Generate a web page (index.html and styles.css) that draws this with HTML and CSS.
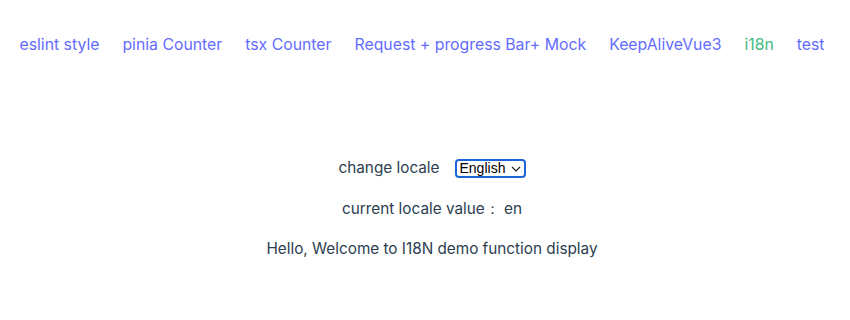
FILE: index.html
```html
<!DOCTYPE html>
<html lang="en">
<head>
<meta charset="utf-8">
<title>i18n</title>
<link rel="stylesheet" href="styles.css">
</head>
<body>
<div id="app">
  <nav class="nav">
    <a class="nav-link" href="#">eslint style</a>
    <a class="nav-link" href="#">pinia Counter</a>
    <a class="nav-link" href="#">tsx Counter</a>
    <a class="nav-link" href="#">Request + progress Bar+ Mock</a>
    <a class="nav-link" href="#">KeepAliveVue3</a>
    <a class="nav-link active" href="#">i18n</a>
    <a class="nav-link" href="#">test</a>
  </nav>
  <main class="content">
    <div class="row">
      <span>change locale</span>
      <span class="select-wrap">
        <select class="locale-select">
          <option>English</option>
          <option>中文</option>
        </select>
        <svg class="chev" width="10" height="6" viewBox="0 0 10 6"><path d="M1 1l4 4 4-4" fill="none" stroke="#222" stroke-width="1.2"/></svg>
      </span>
    </div>
    <div class="row">current locale value： en</div>
    <div class="row">Hello, Welcome to I18N demo function display</div>
  </main>
</div>
</body>
</html>
```
FILE: styles.css
```css
body {
  margin: 8px;
  background: #fff;
  font-family: Inter, "Noto Sans", sans-serif;
  font-size: 16px;
  color: #2c3e50;
  -webkit-font-smoothing: antialiased;
}
#app {
  text-align: center;
}
.nav {
  display: flex;
  justify-content: center;
  gap: 23px;
  padding: 26px 6px 0 0;
  line-height: 22px;
  font-size: 15.8px;
}
.nav-link {
  color: #646cff;
  text-decoration: none;
  font-weight: 400;
}
.nav-link.active {
  color: #42b983;
}
.content {
  margin-top: 101px;
  padding-left: 14px;
  display: flex;
  flex-direction: column;
  align-items: center;
  gap: 18.5px;
  font-size: 15.3px;
}
.row {
  line-height: 22px;
  display: flex;
  align-items: center;
  gap: 15px;
  white-space: pre;
}
.select-wrap {
  position: relative;
  display: inline-flex;
}
.locale-select {
  appearance: none;
  -webkit-appearance: none;
  width: 71px;
  height: 19px;
  border: 2px solid #1a66d6;
  border-radius: 4px;
  background: #fff;
  font-family: "Liberation Sans", Arial, sans-serif;
  font-size: 14px;
  color: #000;
  padding: 0 0 0 3px;
  margin: 0;
  box-sizing: border-box;
  line-height: 15px;
}
.chev {
  position: absolute;
  right: 5px;
  top: 7px;
  pointer-events: none;
}
```
